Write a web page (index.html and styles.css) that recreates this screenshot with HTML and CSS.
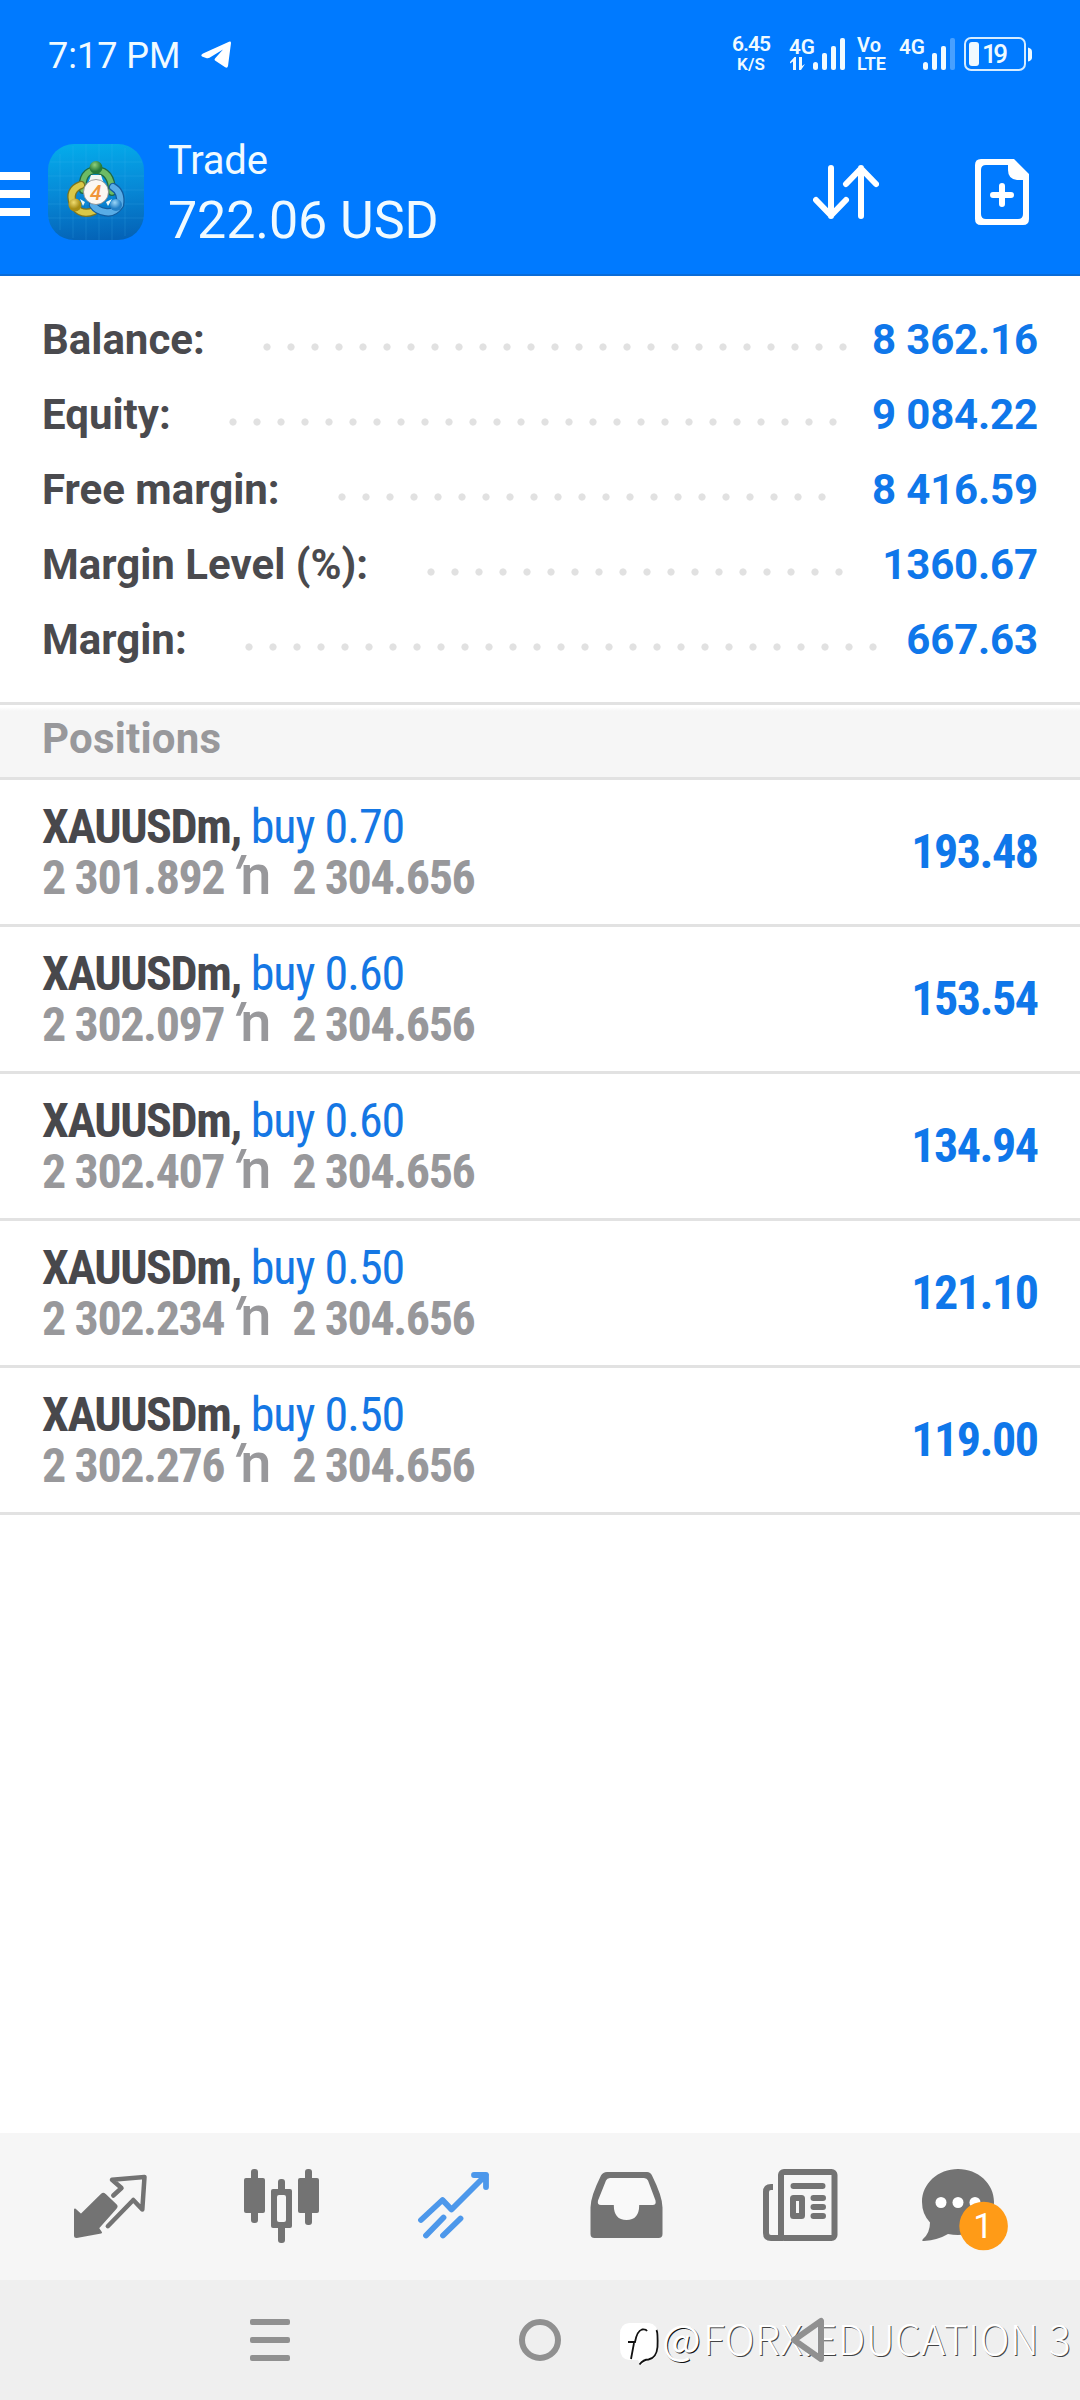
FILE: index.html
```html
<!DOCTYPE html>
<html lang="en">
<head>
<meta charset="utf-8">
<title>Trade</title>
<link rel="stylesheet" href="styles.css">
</head>
<body>
<div class="screen">
  <header class="top">
    <div class="status">
      <span class="clock">7:17 PM</span>
      <svg class="tg" width="30" height="28" viewBox="0 0 30 28"><path d="M2 12.5 28 .7q2-.7 2 1.200L27 25q-.6 2.600-2.800 1.200L14 19.500q-1-1 .2-2.200L22 8.500 8.500 16.800Q7 17.600 5 17L1 15.500Q-.8 14 2 12.500Z" fill="#fff"/></svg>
      <svg class="sys" width="304" height="56" viewBox="730 26 304 56" fill="#f0faff">
        <g class="st">
          <text x="732" y="51" font-size="21" textLength="39">6.45</text>
          <text x="737" y="69.500" font-size="17" textLength="28">K/S</text>
          <text x="789" y="54" font-size="21" textLength="26" lengthAdjust="spacingAndGlyphs">4G</text>
          <text x="857" y="52" font-size="20" textLength="24">Vo</text>
          <text x="857" y="70" font-size="18" textLength="29" lengthAdjust="spacingAndGlyphs">LTE</text>
          <text x="899" y="54" font-size="21" textLength="26" lengthAdjust="spacingAndGlyphs">4G</text>
          <text class="pct" x="982" y="63" font-size="26" textLength="26">19</text>
        </g>
        <path d="M790 62l4.500-5h1.500v13h-3V61.500l-3 2ZM799 57h3v9l3-2-4 6h-2Z"/>
        <g><rect x="813" y="62" width="5" height="8" rx="2.500"/><rect x="822" y="53" width="5" height="17" rx="2"/><rect x="831" y="46" width="5" height="24" rx="2"/><rect x="840" y="38" width="5" height="32" rx="2"/></g>
        <g><rect x="923" y="62" width="5" height="8" rx="2.500"/><rect x="932" y="53" width="5" height="17" rx="2"/><rect x="941" y="46" width="5" height="24" rx="2"/><rect x="950" y="38" width="5" height="32" rx="2" opacity=".3"/></g>
        <rect x="965" y="38" width="60" height="32" rx="6" fill="none" stroke="#d6ecff" stroke-width="2"/>
        <rect x="969" y="42" width="10" height="24" rx="3"/>
        <path d="M1028 47.500q4 1 4 4v6q0 3-4 4Z"/>
      </svg>
    </div>
    <div class="bar">
      <div class="burger"><i></i><i></i><i></i></div>
      <svg class="logo" width="96" height="96" viewBox="0 0 96 96">
        <defs>
          <linearGradient id="bg" x1=".5" y1="0" x2=".6" y2="1"><stop offset="0" stop-color="#04aaea"/><stop offset=".5" stop-color="#0788d6"/><stop offset="1" stop-color="#0462b6"/></linearGradient>
          <radialGradient id="gr" cx=".4" cy=".3"><stop offset="0" stop-color="#8fd07a"/><stop offset="1" stop-color="#257a3a"/></radialGradient>
          <radialGradient id="ye" cx=".4" cy=".3"><stop offset="0" stop-color="#f0dc70"/><stop offset="1" stop-color="#a88d14"/></radialGradient>
          <radialGradient id="bl" cx=".4" cy=".3"><stop offset="0" stop-color="#9ad6f8"/><stop offset="1" stop-color="#2480c6"/></radialGradient>
        </defs>
        <rect width="96" height="96" rx="26" fill="url(#bg)"/>
        <path d="M12 10v76M25 2v92M38 0v96M51 0v96M64 0v96M77 4v88M2 18h92M0 32h96M0 46h96M0 60h96M0 74h96" stroke="#4fc0f4" stroke-opacity=".18"/>
        <g fill="none" stroke-linecap="round">
          <path d="M35 46q-2-19 13-20 16 1 16 22" stroke="#1f6a44" stroke-width="8"/>
          <path d="M35 46q-2-19 13-20 16 1 16 22" stroke="#6dbb65" stroke-width="5.500"/>
          <path d="M25 60Q20 46 33 41M27 63q7 9 19 4" stroke="#7a7420" stroke-width="8.500"/>
          <path d="M25 60Q20 46 33 41M27 63q7 9 19 4" stroke="#d9c848" stroke-width="6"/>
          <path d="M65 43q9 5 7 18-6 9-15 7-8-1-12-7" stroke="#135c9e" stroke-width="8.500"/>
          <path d="M65 43q9 5 7 18-6 9-15 7-8-1-12-7" stroke="#58ace6" stroke-width="6"/>
        </g>
        <path d="M43 31h10l2 6H41ZM32 55l5 3-2 4ZM64 55l-6 3 2 4Z" fill="#f2f8f4"/>
        <circle cx="48" cy="23.500" r="6.500" fill="url(#gr)"/><circle cx="27" cy="61" r="6.500" fill="url(#ye)"/><circle cx="68" cy="61" r="6" fill="url(#bl)"/>
        <circle cx="48" cy="48" r="12.500" fill="#fbf7f2" stroke="#888" stroke-width=".8"/>
        <text class="four" x="42" y="55.500" font-size="21">4</text>
      </svg>
      <div class="titles">
        <div class="t1">Trade</div>
        <div class="t2">722.06 USD</div>
      </div>
      <svg class="sort" width="66" height="54" viewBox="813 165 66 54" fill="none" stroke="#fff" stroke-width="6" stroke-linecap="round" stroke-linejoin="round"><path d="M831 168v48M816 200l15 15.500 15-15.500M861 216v-48M846 184l15-15.500 15 15.500"/></svg>
      <svg class="doc" width="54" height="66" viewBox="975 159 54 66"><path d="M981 159h33l15 15v45q0 6-6 6h-42q-6 0-6-6v-54q0-6 6-6ZM986 165q-5 0-5 5v44q0 5 5 5h32q5 0 5-5v-34h-6q-9-1-9-10v-5Z" fill="#fff" fill-rule="evenodd"/><path d="M1002 186v18M993 195h18" stroke="#fff" stroke-width="6" stroke-linecap="round"/></svg>
    </div>
  </header>

  <section class="summary">
    <div class="row"><span class="k">Balance:</span><span class="lead"><i></i></span><span class="v">8 362.16</span></div>
    <div class="row"><span class="k">Equity:</span><span class="lead"><i></i></span><span class="v">9 084.22</span></div>
    <div class="row"><span class="k">Free margin:</span><span class="lead"><i></i></span><span class="v">8 416.59</span></div>
    <div class="row"><span class="k">Margin Level (%):</span><span class="lead"><i></i></span><span class="v">1360.67</span></div>
    <div class="row"><span class="k">Margin:</span><span class="lead"><i></i></span><span class="v">667.63</span></div>
  </section>

  <h2 class="section">Positions</h2>

  <ul class="positions">
    <li><div class="info"><div class="l1"><b>XAUUSDm,</b> <span>buy 0.70</span></div><div class="l2"><b>2 301.892</b><em><i>′</i>n</em><b>2 304.656</b></div></div><div class="pl">193.48</div></li>
    <li><div class="info"><div class="l1"><b>XAUUSDm,</b> <span>buy 0.60</span></div><div class="l2"><b>2 302.097</b><em><i>′</i>n</em><b>2 304.656</b></div></div><div class="pl">153.54</div></li>
    <li><div class="info"><div class="l1"><b>XAUUSDm,</b> <span>buy 0.60</span></div><div class="l2"><b>2 302.407</b><em><i>′</i>n</em><b>2 304.656</b></div></div><div class="pl">134.94</div></li>
    <li><div class="info"><div class="l1"><b>XAUUSDm,</b> <span>buy 0.50</span></div><div class="l2"><b>2 302.234</b><em><i>′</i>n</em><b>2 304.656</b></div></div><div class="pl">121.10</div></li>
    <li><div class="info"><div class="l1"><b>XAUUSDm,</b> <span>buy 0.50</span></div><div class="l2"><b>2 302.276</b><em><i>′</i>n</em><b>2 304.656</b></div></div><div class="pl">119.00</div></li>
  </ul>

  <nav class="tabs">
    <svg viewBox="24 2133 172 147"><path d="M75 2209.500l6 5.500 20.800-20.500q1.500-1.500 3 0l11 10.500q1.500 1.500 0 3L98 2228l3 4.500-24.500 4.500q-1.500 0-1.500-1.500Z" fill="#737373" stroke="#737373" stroke-width="2" stroke-linejoin="round"/><path d="M113.300 2195.500l8.200-7.500-9.500-8.300 32.500-2.700-2.200 32.500-9-9.500-25.500 26.200" fill="none" stroke="#737373" stroke-width="4.500" stroke-linejoin="round" stroke-linecap="round"/></svg>
    <svg viewBox="196 2133 172 147" fill="#737373"><rect x="244" y="2178" width="21" height="35" rx="2"/><rect x="251" y="2169" width="7" height="54" rx="3"/><rect x="298" y="2178" width="21" height="35" rx="2"/><rect x="305" y="2169" width="7" height="56" rx="3"/><rect x="278" y="2179" width="7" height="64" rx="3"/><rect x="271" y="2189" width="21" height="39" rx="2"/><rect x="277" y="2195" width="9" height="27" rx="2" fill="#f6f6f6"/></svg>
    <svg viewBox="368 2133 172 147" fill="none" stroke="#4d98eb" stroke-width="5.800" stroke-linecap="round" stroke-linejoin="round"><path d="M421 2220l21.500-20 9 9.500 34.500-34.500M474 2175h12v12"/><path d="M426 2235.500l17.500-18M443 2235.500l17.500-17"/></svg>
    <svg viewBox="540 2133 172 147"><path d="M607 2172h40q3.500 0 5 3.500 10.500 21 10.500 32V2234q0 4-4 4h-64q-4 0-4-4v-26.500q0-11 10.500-32 2-3.500 6-3.500Z" fill="#737373"/><path d="M610 2178h34q3 0 4 2.500l7.500 20q1 4.500-3 4.500h-13.300q0 15-12.700 15t-12.700-15H601q-4 0-3-4.500l8-20q1-2.500 4-2.500Z" fill="#f9f9f9"/></svg>
    <svg viewBox="712 2133 172 147"><path d="M773 2187h-2q-5 0-5 5v41q0 5 5 5h12" fill="none" stroke="#737373" stroke-width="6"/><rect x="781" y="2172" width="53.500" height="66" rx="3" fill="none" stroke="#737373" stroke-width="6"/><g fill="none" stroke="#737373" stroke-width="6" stroke-linecap="round"><path d="M793.500 2186h29M813.500 2198h9.500M813.500 2207h9.500M813.500 2216h9.500"/><rect x="793" y="2198" width="9" height="18" rx=".5"/></g></svg>
    <svg viewBox="884 2133 172 147"><path d="M958 2169c20 0 36 14.500 36 33s-16 33-36 33q-5 0-10-1-10 6-24 7-3 0-1-2 7-6 7-16.500-8-8.500-8-20.500c0-18.500 16-33 36-33Z" fill="#737373"/><g fill="#fff"><circle cx="941" cy="2202.500" r="5.500"/><circle cx="958" cy="2202.500" r="5.500"/><circle cx="975" cy="2202.500" r="5.500"/></g><circle cx="983.600" cy="2226" r="24.300" fill="#ff9b17"/><text class="badge" x="983" y="2238" text-anchor="middle" font-size="35">1</text></svg>
  </nav>

  <footer class="sysnav">
    <div class="recent"><i></i><i></i><i></i></div>
    <div class="home"></div>
    <svg class="back" width="36" height="48" viewBox="0 0 36 48"><path d="M31 5v38L4 24Z" fill="none" stroke="#909090" stroke-width="6" stroke-linejoin="round"/></svg>
    <div class="mark">
      <svg width="42" height="44" viewBox="0 0 42 44"><path d="M10 1h20q9 1 9 13v12q0 11-9 12l-8 5-3-5h-9Q1 37 1 26V12Q1 2 10 1Z" fill="#fff"/><path d="M12 37l3-16M9 20h7q2-11 7-12.500 4-.5 5 1.500M37.500 8q1.500 3 1 17-1 11-9 12.500-5 0-9 5" fill="none" stroke="#111" stroke-width="1.800"/></svg>
      <span class="at">@</span><span class="name">FORX.EDUCATION 3</span>
    </div>
  </footer>
</div>
</body>
</html>
```
FILE: styles.css
```css
* { box-sizing: border-box; }
body { margin: 0; background: #fff; font-family: Roboto, "Noto Sans", sans-serif; }
.screen { width: 1080px; height: 2400px; display: flex; flex-direction: column; overflow: hidden; position: relative; }

.top { height: 276px; background: #007aff; border-bottom: 2px solid #0a6cd8; color: #f0faff; }
.status { height: 108px; display: flex; align-items: flex-start; padding: 26px 46px 0 48px; }
.clock { font-size: 36px; line-height: 42px; width: 153px; white-space: nowrap; margin-top: 9px; }
.tg { margin-top: 15px; }
.sys { margin-left: auto; }
.st text { font-weight: 600; }
.st .pct { font-weight: 500; }
.bar { display: flex; align-items: flex-start; padding: 36px 51px 0 0; height: 132px; }
.burger { width: 30px; margin-top: 28px; display: grid; gap: 10px; }
.burger i { height: 8px; background: #fff; }
.logo { margin-left: 18px; }
.four { fill: #f0953a; font-weight: 500; font-style: italic; }
.titles { margin-left: 24px; flex: 1; }
.t1 { font-size: 40px; line-height: 44px; margin-top: -5px; letter-spacing: -.2px; }
.t2 { font-size: 52px; line-height: 60px; margin-top: 8px; letter-spacing: -.1px; }
.sort { margin-top: 21px; }
.doc { margin: 15px 0 0 96px; }

.summary { height: 426px; padding: 26px 42px 0; }
.row { height: 75px; display: flex; line-height: 75px; font-size: 42px; font-weight: 700; }
.k { color: #4a4a4e; white-space: nowrap; }
.lead { flex: 1; margin: 0 15.5px 0 50.5px; }
.lead i { display: block; height: 8px; margin-top: 41px; width: round(down, 100%, 24px); background: radial-gradient(circle at 12px 4px, #e1e1e1 3.200px, transparent 4px) 0 0 / 24px 8px; }
.v { color: #0f77ea; white-space: nowrap; letter-spacing: -.15px; }

.section { margin: 0; height: 78px; border-top: 3px solid #e2e2e2; border-bottom: 3px solid #e2e2e2; background: linear-gradient(#fff 2px, #f6f6f6 6px); padding-left: 42px; font-size: 42px; line-height: 67px; letter-spacing: .2px; color: #98989b; font-weight: 700; }

.positions { list-style: none; margin: 0; padding: 0; font-size: 48px; font-stretch: 75%; flex: 1; }
.positions li { height: 147px; border-bottom: 3px solid #e2e2e2; padding: 19px 42px 0; display: flex; justify-content: space-between; }
.l1, .l2 { height: 51px; line-height: 56px; white-space: nowrap; display: flex; }
.l1 { color: #1577e4; letter-spacing: -1px; gap: 10px; }
.l1 b { color: #48484c; letter-spacing: -1.45px; }
.l2 { color: #98989b; letter-spacing: -1.4px; }
.l2 em { font-style: normal; font-size: 56px; line-height: 51px; font-weight: 500; font-stretch: 95%; width: 61px; margin-left: 7px; letter-spacing: 0; }
.l2 em i { display: inline-block; font-style: normal; font-size: 52px; font-weight: 700; width: 9px; transform: skewX(-22deg); }
.pl { color: #0f77ea; font-weight: 700; line-height: 56px; padding-top: 25px; letter-spacing: -1.5px; margin-right: .5px; }

.tabs { height: 147px; background: #f6f6f6; padding: 0 24px; display: grid; grid-template-columns: repeat(6, 172px); }
.tabs svg { width: 172px; height: 147px; }
.badge { fill: #fff; }

.sysnav { height: 120px; background: #efefef; display: flex; align-items: center; padding-left: 250px; position: relative; }
.recent { width: 40px; display: grid; gap: 12px; }
.recent i { height: 6px; border-radius: 2px; background: #909090; }
.home { width: 42px; height: 42px; border: 6px solid #909090; border-radius: 50%; margin-left: 229px; }
.back { margin-left: 229px; position: relative; z-index: 2; }
.mark { position: absolute; left: 619px; top: 42px; display: flex; color: #fff; white-space: nowrap; font-family: "Noto Sans CJK SC", sans-serif; font-weight: 300; font-size: 41px; line-height: 30px; text-shadow: 1px 1px 0 #444; }
.mark .at { width: 41px; margin-left: 1px; font-weight: 400; text-shadow: 1px 1px 0 #111; }
.mark .name { letter-spacing: .45px; }
```
